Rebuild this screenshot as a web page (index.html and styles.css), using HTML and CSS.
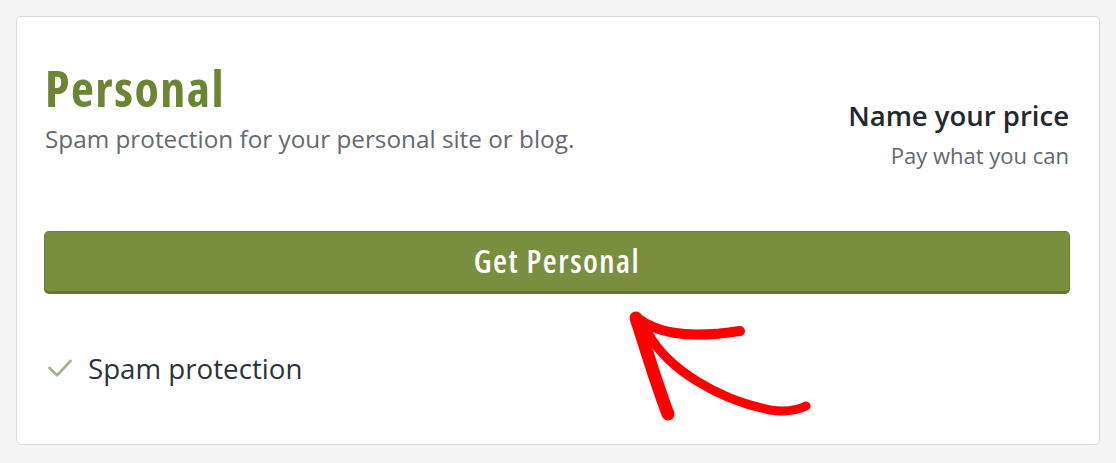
FILE: index.html
```html
<!DOCTYPE html>
<html lang="en">
<head>
<meta charset="utf-8">
<title>Personal plan</title>
<link rel="stylesheet" href="styles.css">
</head>
<body>
<div class="page">
  <section class="card">
    <div class="card-head">
      <div class="plan">
        <h2 class="plan-title">Personal</h2>
        <p class="plan-desc">Spam protection for your personal site or blog.</p>
      </div>
      <div class="price">
        <div class="price-name">Name your price</div>
        <div class="price-note">Pay what you can</div>
      </div>
    </div>
    <a class="cta" href="#">Get Personal</a>
    <ul class="features">
      <li class="feature">
        <svg class="check" viewBox="0 0 24 18" width="24" height="18" aria-hidden="true">
          <path d="M1.5 9 L9 16.3 L22.5 2" fill="none" stroke="#9fb47f" stroke-width="2.6" stroke-linecap="round" stroke-linejoin="round"/>
        </svg>
        <span>Spam protection</span>
      </li>
    </ul>
  </section>
  <svg class="annotation" viewBox="0 0 1116 463" width="1116" height="463" aria-hidden="true">
    <g fill="none" stroke="#ff0000" stroke-linecap="round" stroke-linejoin="round">
      <path d="M637 318 C655 331 682 340 740 331" stroke-width="10"/>
      <path d="M636 318 C645 345 655 380 668 414" stroke-width="13"/>
      <path d="M648 333 C668 370 720 400 770 410 C785 412 798 410 806 406" stroke-width="9"/>
    </g>
  </svg>
</div>
</body>
</html>
```

FILE: styles.css
```css
html, body {
  margin: 0;
  padding: 0;
}
body {
  background: #f4f4f4;
  font-family: "Open Sans", "Noto Sans", sans-serif;
  color: #2c3338;
}
.page {
  position: relative;
  padding: 16px;
  height: 463px;
  box-sizing: border-box;
}
.card {
  background: #fff;
  border: 1px solid #dcdcde;
  border-radius: 5px;
  height: 429px;
  box-sizing: border-box;
  padding: 45px 30px 0 28px;
  display: flex;
  flex-direction: column;
}
.card-head {
  display: flex;
  justify-content: space-between;
  align-items: flex-start;
}
.plan-title {
  margin: 0;
  font-size: 50px;
  line-height: 52px;
  font-weight: 700;
  font-stretch: 87.5%;
  letter-spacing: 1.5px;
  color: #6b8532;
}
.plan-desc {
  margin: 9px 0 0 0;
  font-size: 24.3px;
  line-height: 32px;
  color: #646970;
}
.price {
  text-align: right;
  padding-top: 36px;
}
.price-name {
  font-size: 27.5px;
  line-height: 36px;
  font-weight: 600;
  color: #23282d;
}
.price-note {
  margin-top: 6px;
  font-size: 22px;
  line-height: 30px;
  color: #646970;
}
.cta {
  display: block;
  margin: 61px -1px 0 -1px;
  height: 63px;
  box-sizing: border-box;
  background: #7a8e40;
  border: 1px solid #6c8034;
  border-bottom: 3px solid #62772c;
  border-radius: 5px;
  color: #fff;
  text-decoration: none;
  text-align: center;
  font-size: 32px;
  line-height: 57px;
  font-weight: 600;
  font-stretch: 87.5%;
  letter-spacing: 1.5px;
}
.features {
  list-style: none;
  margin: 56px 0 0 0;
  padding: 0 0 0 3px;
}
.feature {
  display: flex;
  align-items: center;
  gap: 16px;
  font-size: 27.7px;
  line-height: 36px;
  color: #2c3338;
}
.check {
  flex: none;
}
.annotation {
  position: absolute;
  left: 0;
  top: 0;
  pointer-events: none;
}
```
